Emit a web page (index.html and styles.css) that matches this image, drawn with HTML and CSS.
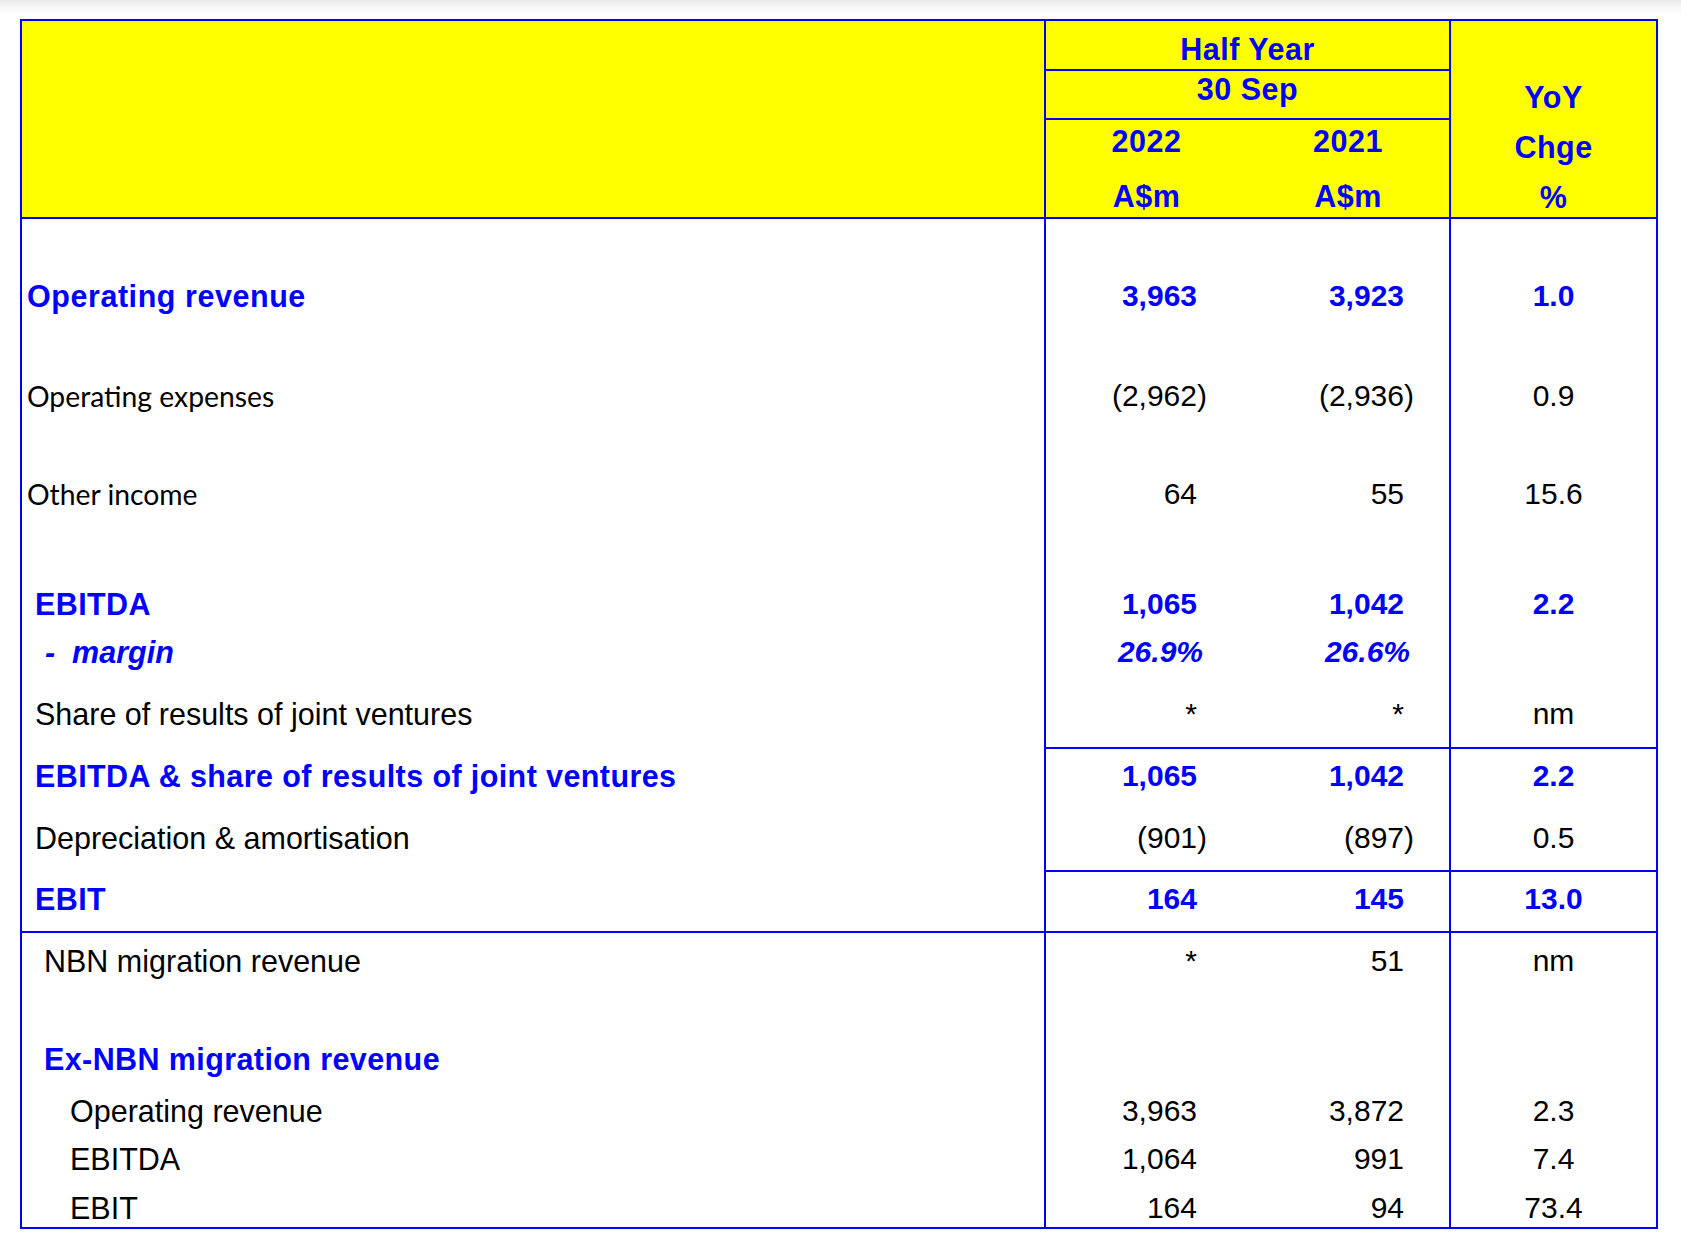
FILE: index.html
```html
<!DOCTYPE html>
<html lang="en">
<head>
<meta charset="utf-8">
<title>Half Year Results</title>
<link rel="stylesheet" href="styles.css">
</head>
<body>
<div class="sheet">
  <div class="head">
    <div class="h-blank"></div>
    <div class="h-half">Half Year</div>
    <div class="h-yoy"><span>YoY</span><span>Chge</span><span>%</span></div>
    <div class="h-sep">30 Sep</div>
    <div class="h-yr"><span>2022</span><span>A$m</span></div>
    <div class="h-yr h-yr-b"><span>2021</span><span>A$m</span></div>
  </div>

  <div class="row r1">
    <div class="c-label bl wide pad-a">Operating revenue</div>
    <div class="c-a bl">3,963</div>
    <div class="c-b bl">3,923</div>
    <div class="c-y bl">1.0</div>
  </div>
  <div class="row r2">
    <div class="c-label cal pad-a">Operating expenses</div>
    <div class="c-a">(2,962<span class="cp">)</span></div>
    <div class="c-b">(2,936<span class="cp">)</span></div>
    <div class="c-y">0.9</div>
  </div>
  <div class="row r3">
    <div class="c-label cal pad-a">Other income</div>
    <div class="c-a">64</div>
    <div class="c-b">55</div>
    <div class="c-y">15.6</div>
  </div>
  <div class="row r4">
    <div class="c-label bl pad-b">EBITDA</div>
    <div class="c-a bl">1,065</div>
    <div class="c-b bl">1,042</div>
    <div class="c-y bl">2.2</div>
  </div>
  <div class="row r5">
    <div class="c-label bi pad-c">-&nbsp;&nbsp;margin</div>
    <div class="c-a bi">26.9%</div>
    <div class="c-b bi">26.6%</div>
    <div class="c-y"></div>
  </div>
  <div class="row r6 rule-num">
    <div class="c-label pad-b">Share of results of joint ventures</div>
    <div class="c-a">*</div>
    <div class="c-b">*</div>
    <div class="c-y">nm</div>
  </div>
  <div class="row r7">
    <div class="c-label bl pad-b">EBITDA &amp; share of results of joint ventures</div>
    <div class="c-a bl">1,065</div>
    <div class="c-b bl">1,042</div>
    <div class="c-y bl">2.2</div>
  </div>
  <div class="row r8 rule-num">
    <div class="c-label pad-b">Depreciation &amp; amortisation</div>
    <div class="c-a">(901<span class="cp">)</span></div>
    <div class="c-b">(897<span class="cp">)</span></div>
    <div class="c-y">0.5</div>
  </div>
  <div class="row r9 rule-all">
    <div class="c-label bl pad-b">EBIT</div>
    <div class="c-a bl">164</div>
    <div class="c-b bl">145</div>
    <div class="c-y bl">13.0</div>
  </div>
  <div class="row r10">
    <div class="c-label pad-d">NBN migration revenue</div>
    <div class="c-a">*</div>
    <div class="c-b">51</div>
    <div class="c-y">nm</div>
  </div>
  <div class="row r11">
    <div class="c-label bl pad-d">Ex-NBN migration revenue</div>
    <div class="c-a"></div>
    <div class="c-b"></div>
    <div class="c-y"></div>
  </div>
  <div class="row r12">
    <div class="c-label pad-e">Operating revenue</div>
    <div class="c-a">3,963</div>
    <div class="c-b">3,872</div>
    <div class="c-y">2.3</div>
  </div>
  <div class="row r13">
    <div class="c-label pad-e">EBITDA</div>
    <div class="c-a">1,064</div>
    <div class="c-b">991</div>
    <div class="c-y">7.4</div>
  </div>
  <div class="row r14">
    <div class="c-label pad-e">EBIT</div>
    <div class="c-a">164</div>
    <div class="c-b">94</div>
    <div class="c-y">73.4</div>
  </div>
</div>
</body>
</html>
```
FILE: styles.css
```css
html, body {
  margin: 0;
  padding: 0;
}
body {
  background: linear-gradient(to bottom, #e9e9e9 0, #f5f5f5 6px, #ffffff 15px) no-repeat;
  background-color: #ffffff;
  font-family: "Liberation Sans", Arial, sans-serif;
  color: #000;
  padding: 19px 0 0 20px;
  width: 1681px;
  height: 1249px;
  box-sizing: border-box;
  overflow: hidden;
}
.sheet {
  box-sizing: border-box;
  width: 1638px;
  height: 1210px;
  border: 2px solid #0000ff;
  display: flex;
  flex-direction: column;
}
.sheet * {
  box-sizing: border-box;
}

/* header */
.head {
  display: grid;
  grid-template-columns: 1024px 201px 204px 205px;
  grid-template-rows: 50px 49px 97px;
  height: 198px;
  background: #ffff00;
  border-bottom: 2px solid #0000ff;
  color: #0000ff;
  font-weight: bold;
  font-size: 30.5px;
  line-height: 30px;
  letter-spacing: 0.5px;
  text-align: center;
}
.h-blank {
  grid-column: 1;
  grid-row: 1 / 4;
  border-right: 2px solid #0000ff;
}
.h-half {
  grid-column: 2 / 4;
  grid-row: 1;
  border-right: 2px solid #0000ff;
  border-bottom: 2px solid #0000ff;
  padding-top: 13px;
}
.h-sep {
  grid-column: 2 / 4;
  grid-row: 2;
  border-right: 2px solid #0000ff;
  border-bottom: 2px solid #0000ff;
  padding-top: 3px;
}
.h-yr {
  grid-row: 3;
  grid-column: 2;
  display: flex;
  flex-direction: column;
  align-items: center;
  gap: 25px;
  padding-top: 6px;
}
.h-yr-b {
  grid-column: 3;
  border-right: 2px solid #0000ff;
}
.h-yoy {
  grid-column: 4;
  grid-row: 1 / 4;
  display: flex;
  flex-direction: column;
  align-items: center;
  gap: 20px;
  padding-top: 61px;
}

/* body rows */
.row {
  display: grid;
  grid-template-columns: 1024px 201px 204px 205px;
  font-size: 30.5px;
  line-height: 30px;
  white-space: nowrap;
}
.row > div {
  min-width: 0;
}
.c-label {
  border-right: 2px solid #0000ff;
  text-align: left;
}
.c-a {
  text-align: right;
  padding-right: 50px;
  font-size: 30px;
}
.c-b {
  text-align: right;
  padding-right: 45px;
  border-right: 2px solid #0000ff;
  font-size: 30px;
}
.c-y {
  text-align: center;
  font-size: 30px;
}
.c-a.bi { padding-right: 44px; }
.c-b.bi { padding-right: 39px; }
.cp {
  margin-right: -10px;
}

.rule-num .c-a,
.rule-num .c-b,
.rule-num .c-y {
  border-bottom: 2px solid #0000ff;
}
.rule-all > div {
  border-bottom: 2px solid #0000ff;
}

.bl {
  color: #0000ff;
  font-weight: bold;
}
.c-label.bl {
  letter-spacing: 0.4px;
}
.bi {
  color: #0000ff;
  font-weight: bold;
  font-style: italic;
}
.c-label.wide {
  letter-spacing: 0.55px;
}
.cal {
  font-family: Lato, "Liberation Sans", sans-serif;
  font-size: 28.3px;
}

.pad-a { padding-left: 5px; }
.pad-b { padding-left: 13px; }
.pad-c { padding-left: 23px; }
.pad-d { padding-left: 22px; }
.pad-e { padding-left: 48px; }

.r1 { height: 127px; }
.r1 > div { padding-top: 62px; }
.r2 { height: 98px; }
.r2 > div { padding-top: 35px; }
.r3 { height: 116px; }
.r3 > div { padding-top: 35px; }
.r4 { height: 68px; }
.r4 > div { padding-top: 29px; }
.r5 { height: 52px; }
.r5 > div { padding-top: 9px; }
.r6 { height: 69px; }
.r6 > div { padding-top: 19px; }
.r7 { height: 57px; }
.r7 > div { padding-top: 12px; }
.r8 { height: 66px; }
.r8 > div { padding-top: 17px; }
.r9 { height: 61px; }
.r9 > div { padding-top: 12px; }
.r10 { height: 67px; }
.r10 > div { padding-top: 13px; }
.r11 { height: 86px; }
.r11 > div { padding-top: 44px; }
.r12 { height: 49px; }
.r12 > div { padding-top: 10px; }
.r13 { height: 48px; }
.r13 > div { padding-top: 9px; }
.r14 { height: 44px; }
.r14 > div { padding-top: 10px; }
```
